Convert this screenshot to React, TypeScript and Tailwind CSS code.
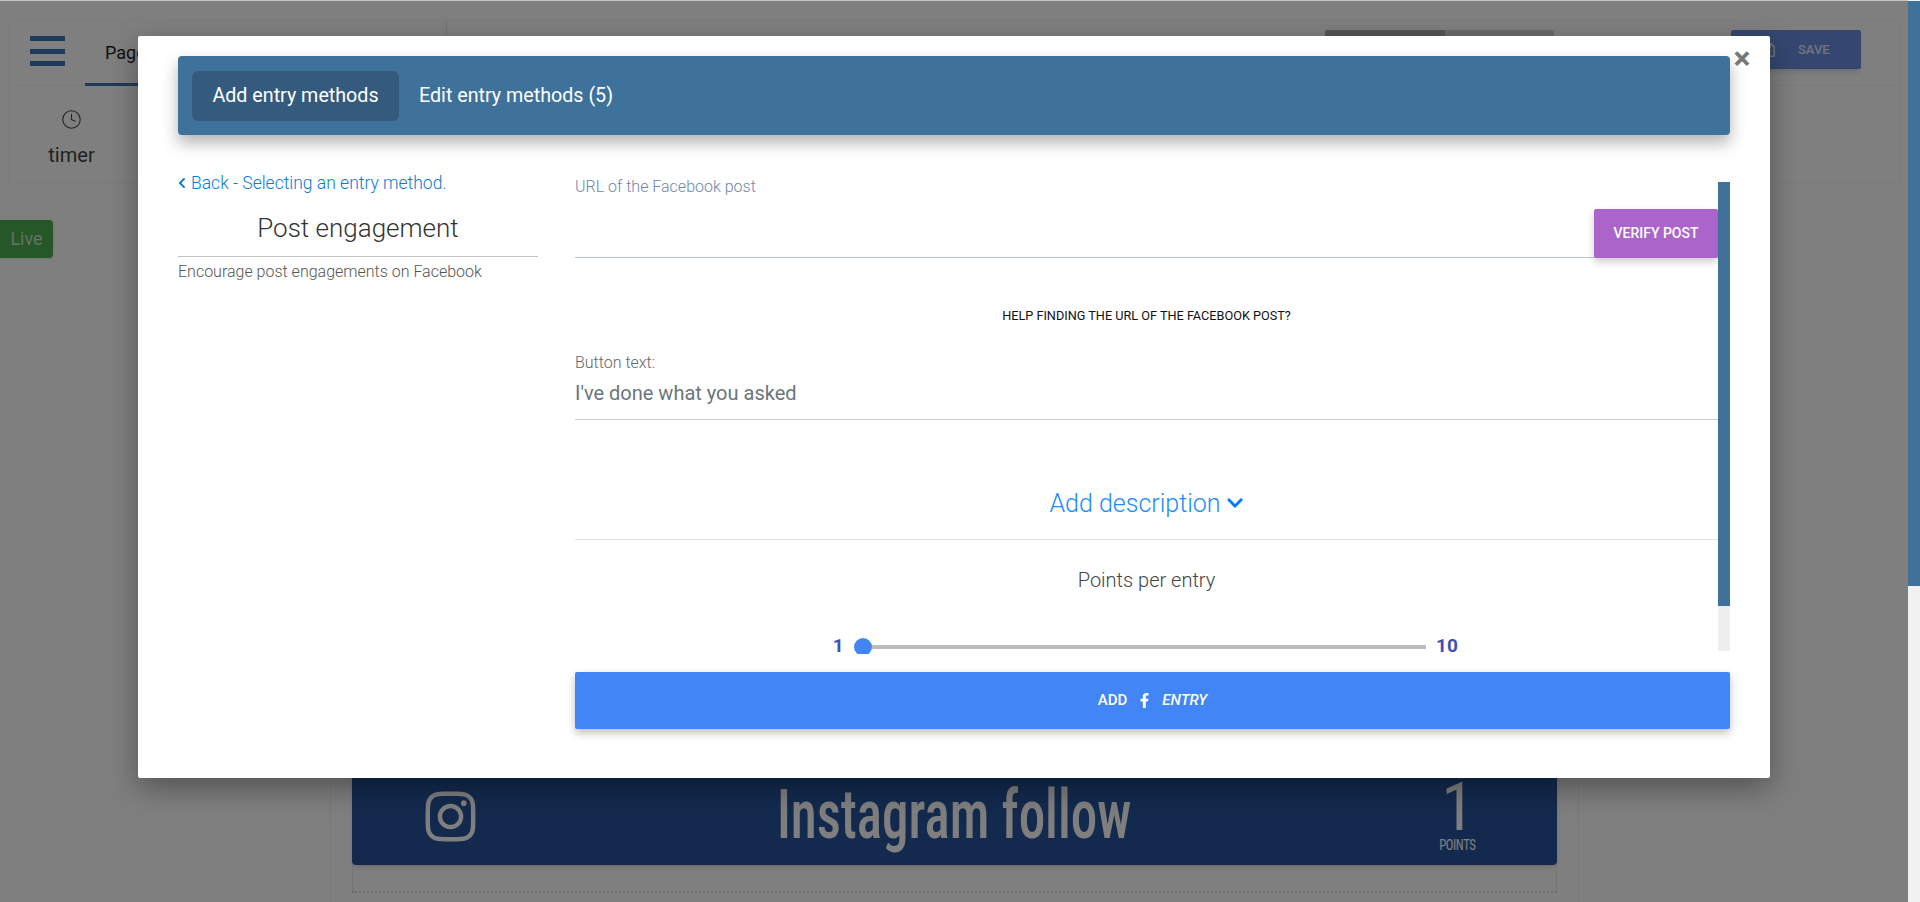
import React from "react";
import { FaChevronLeft, FaChevronDown, FaFacebookF, FaInstagram, FaRegSave } from "react-icons/fa";
import { Clock } from "lucide-react";

function Background() {
  return (
    <div className="w-[1908px] h-[902px] pt-[20px] px-[8px] flex flex-col bg-white">
      <div className="h-[66px] border border-[#f6f6f6] flex items-stretch shrink-0">
        <div className="w-[76px] pl-[21px] pt-[15px] shrink-0">
          <div className="w-[35px] h-[5px] bg-[#3c76b8]" />
          <div className="w-[35px] h-[5px] bg-[#3c76b8] mt-[8px]" />
          <div className="w-[35px] h-[5px] bg-[#3c76b8] mt-[7px]" />
        </div>
        <div className="w-[362px] shrink-0 border-r border-[#e6e6e6] flex items-start">
          <div className="h-[65px] px-[20px] pt-[20px] border-b-[3px] border-[#3c76b8] text-[18px] leading-[24px] text-[#222]">Page</div>
        </div>
        <div className="flex-1 flex items-start pt-[9px] pl-[878px]">
          <div className="w-[229px] h-[7px] flex rounded-[2px] overflow-hidden shrink-0">
            <div className="w-[120px] bg-[#aaaaaa]" />
            <div className="flex-1 bg-[#d4d4d4]" />
          </div>
          <div className="ml-[177px] w-[130px] h-[39px] bg-[#6b8fe0] rounded-[2px] flex items-center shrink-0 shadow-md">
            <FaRegSave className="ml-[29px] text-[16px] text-white/80" />
            <span className="ml-[22px] text-[13px] font-medium text-white/80">SAVE</span>
          </div>
        </div>
      </div>
      <div className="h-[97px] border border-t-0 border-[#f6f6f6] shrink-0">
        <div className="w-[125px] flex flex-col items-center pt-[23px]">
          <Clock className="w-[21px] h-[21px] text-[#444]" strokeWidth={1.25} />
          <div className="text-[20px] leading-[24px] mt-[13px] text-[#444]">timer</div>
        </div>
      </div>
      <div className="-ml-[8px] mt-[37px] w-[53px] h-[38px] pb-[2px] bg-[#4caf50] rounded-r-[4px] flex items-center justify-center text-[18px] text-white/70 shrink-0 shadow-sm">
        Live
      </div>
      <div className="ml-[322px] w-[1249px] flex-1 border-x border-[#f4f4f4] pt-[507px] px-[21px]">
        <div className="h-[100px] bg-[#26549c] rounded-b-[4px] grid grid-cols-[1fr_auto_1fr] text-white shadow-md [font-family:'Roboto_Condensed','Liberation_Sans',sans-serif]">
          <div className="pl-[70px] pt-[23px]">
            <FaInstagram className="text-[57px]" />
          </div>
          <div className="pt-[10px] text-[68px] leading-[80px] font-medium scale-x-[0.78]">Instagram follow</div>
          <div className="flex justify-end pr-[78px] pt-[14px]">
            <div className="flex flex-col items-center">
              <span className="text-[66px] leading-[58px]">1</span>
              <span className="text-[15px] leading-[16px] tracking-[-0.5px] scale-x-[0.85]">POINTS</span>
            </div>
          </div>
        </div>
        <div className="h-[28px] border-x border-b-2 border-dotted border-[#d8d8d8]" />
      </div>
    </div>
  );
}

function LeftColumn() {
  return (
    <div className="w-[360px] shrink-0 pt-[37px]">
      <div className="flex items-center text-[17.5px] leading-[22px] font-light text-[#0b7ad6]">
        <FaChevronLeft className="text-[12px] -ml-[2px] mr-[3px]" />
        <span>Back - Selecting an entry method.</span>
      </div>
      <div className="mt-[16px] h-[47px] border-b border-[#c4c4c4] text-center text-[26px] leading-[36px] font-light text-[#333]">
        Post engagement
      </div>
      <div className="mt-[5px] text-[16px] leading-[20px] font-light text-[#555]">Encourage post engagements on Facebook</div>
    </div>
  );
}

function RightColumn() {
  return (
    <div className="ml-[37px] flex-1 flex flex-col min-w-0">
      <div className="flex h-[519px] pt-[43px]">
        <div className="w-[1143px] h-[476px] overflow-hidden">
          <div className="h-[80px] border-b border-[#b2c2e6] flex justify-between">
            <div className="text-[16px] leading-[18px] font-light text-[#6f86a8]">URL of the Facebook post</div>
            <button className="self-end -mb-px w-[124px] h-[49px] bg-[#ab64c9] text-white text-[14px] font-medium rounded-[2px] shadow-[0_4px_8px_rgba(0,0,0,0.2)]">
              VERIFY POST
            </button>
          </div>
          <div className="mt-[50px] text-center text-[12.7px] leading-[16px] text-[#111]">HELP FINDING THE URL OF THE FACEBOOK POST?</div>
          <div className="mt-[29px] text-[16px] leading-[20px] font-light text-[#666]">Button text:</div>
          <div className="mt-[5px] h-[42px] border-b border-[#cccccc] text-[20px] leading-[30px] text-[#6c757d]">I've done what you asked</div>
          <div className="mt-[67px] h-[53px] border-b border-[#e4e4e4] flex items-start justify-center gap-[5px] text-[25px] leading-[34px] font-light text-[#1a8cff]">
            <span>Add description</span>
            <FaChevronDown className="text-[18px] mt-[7px] text-[#007bff]" />
          </div>
          <div className="mt-[26px] text-center text-[20px] leading-[28px] font-light text-[#444]">Points per entry</div>
          <div className="mt-[45px] pr-[10px] flex items-start justify-center">
            <span className="w-[26px] -mt-[1px] text-[19px] leading-[16px] font-bold text-[#3f51b5] text-center">1</span>
            <div className="relative w-[572px] ml-[3px] h-[16px] pt-[6px]">
              <div className="ml-[18px] h-[4px] bg-[#bdbdbd]" />
              <div className="absolute left-0 top-[-1px] w-[18px] h-[18px] rounded-full bg-[#4285f4]" />
            </div>
            <span className="ml-[10px] -mt-[1px] text-[19px] leading-[16px] font-bold text-[#3f51b5]">10</span>
          </div>
        </div>
        <div className="w-[12px] h-[469px] mt-[4px] bg-[#eeeeee] shrink-0">
          <div className="h-[424px] bg-[#3e729b]" />
        </div>
      </div>
      <button className="mt-[18px] h-[57px] w-[1155px] bg-[#4285f4] rounded-[2px] text-white text-[15px] font-medium flex items-center justify-center gap-[10px] shadow-[0_4px_8px_rgba(0,0,0,0.25)]">
        <span>ADD</span>
        <FaFacebookF className="text-[15px]" />
        <span className="italic">ENTRY</span>
      </button>
    </div>
  );
}

export default function App() {
  return (
    <div className="relative h-[902px] w-[1920px] overflow-hidden bg-white flex [font-family:Roboto,'Liberation_Sans',sans-serif]">
      <Background />
      <div className="w-[12px] h-[902px] bg-[#f1f1f1] pt-px shrink-0">
        <div className="h-[585px] bg-[#3e729b]" />
      </div>
      <div className="absolute left-0 top-0 w-[1908px] h-[902px] bg-black/50 border-t border-[#c4c4c4]" />
      <div className="absolute left-[138px] top-[36px] w-[1632px] h-[742px] bg-white rounded-[2px] shadow-[0_10px_30px_rgba(0,0,0,0.35)] pt-[20px] px-[40px]">
        <div className="relative h-[79px] bg-[#3e729b] rounded-[4px] flex items-center pl-[14px] gap-[20px] text-white text-[19.7px] shadow-[0_8px_16px_rgba(0,0,0,0.3)]">
          <div className="w-[207px] h-[50px] bg-[#345b7e] rounded-[6px] flex items-center justify-center">Add entry methods</div>
          <div>Edit entry methods (5)</div>
          <div className="absolute right-[-20px] top-[-10px] text-[32px] leading-[24px] font-bold text-[#777] w-[16px] flex justify-center">×</div>
        </div>
        <div className="flex">
          <LeftColumn />
          <RightColumn />
        </div>
      </div>
    </div>
  );
}
